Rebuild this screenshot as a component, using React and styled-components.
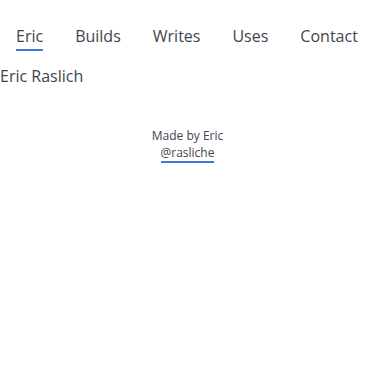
import React from "react";
import styled, { createGlobalStyle } from "styled-components";

const Global = createGlobalStyle`
  body { margin: 0; font-family: "Open Sans", sans-serif; color: #3e4550; background: #fff; }
`;

const Nav = styled.nav`
  display: flex;
  gap: 32px;
  padding: 25px 16px 0;
`;

const NavLink = styled.a`
  font-size: 16px;
  line-height: 22px;
  color: #3e4550;
  text-decoration: none;
  padding-bottom: 2px;
  border-bottom: 2px solid ${(p) => (p.$active ? "#3d79d6" : "transparent")};
`;

const Title = styled.h1`
  margin: 14px 0 0;
  font-size: 16px;
  font-weight: 400;
  line-height: 22px;
`;

const Footer = styled.footer`
  margin-top: 40px;
  display: flex;
  flex-direction: column;
  align-items: center;
  font-size: 12px;
  line-height: 17px;
  color: #3e4550;
`;

const FootLink = styled.a`
  color: #3e4550;
  text-decoration: none;
  border-bottom: 2px solid #3d79d6;
`;

export default function App() {
  return (
    <>
      <Global />
      <Nav>
        <NavLink $active>Eric</NavLink>
        <NavLink>Builds</NavLink>
        <NavLink>Writes</NavLink>
        <NavLink>Uses</NavLink>
        <NavLink>Contact</NavLink>
      </Nav>
      <Title>Eric Raslich</Title>
      <Footer>
        <span>Made by Eric</span>
        <FootLink>@rasliche</FootLink>
      </Footer>
    </>
  );
}
